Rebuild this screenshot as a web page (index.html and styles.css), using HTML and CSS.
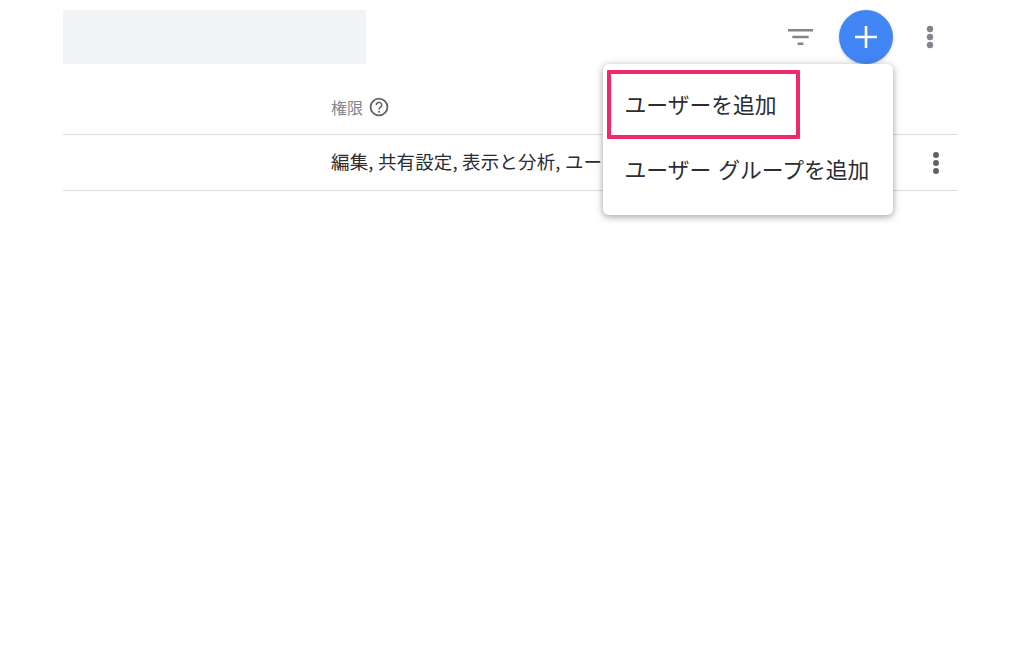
FILE: index.html
```html
<!DOCTYPE html>
<html lang="ja">
<head>
<meta charset="utf-8">
<title>ユーザーを追加</title>
<link rel="stylesheet" href="styles.css">
</head>
<body>
<div class="page">
  <header class="toolbar">
    <div class="placeholder"></div>
    <div class="actions">
      <svg class="filter-icon" width="25" height="18" viewBox="0 0 26 18"><path d="M0 2h26M4.500 9h17M10 16h6" stroke="#80868b" stroke-width="2.600" fill="none"/></svg>
      <div class="fab"><svg width="24" height="24" viewBox="0 0 24 24"><path d="M12 1v22M1 12h22" stroke="#fff" stroke-width="2.600" fill="none"/></svg></div>
      <svg class="more-top" width="8" height="24" viewBox="0 0 8 24"><circle cx="4" cy="4" r="3.200" fill="#80868b"/><circle cx="4" cy="12" r="3.200" fill="#80868b"/><circle cx="4" cy="20" r="3.200" fill="#80868b"/></svg>
    </div>
  </header>
  <div class="head-row">
    <span class="head-label">権限</span>
    <svg class="help" width="20" height="20" viewBox="0 0 20 20"><circle cx="10" cy="10" r="8.400" fill="none" stroke="#5f6368" stroke-width="1.800"/><path d="M7.300 8a2.700 2.700 0 1 1 4.300 2.200c-1 .7-1.600 1.200-1.600 2.400" fill="none" stroke="#5f6368" stroke-width="1.600"/><circle cx="10" cy="14.800" r="1" fill="#5f6368"/></svg>
  </div>
  <div class="row">
    <span class="row-text">編集, 共有設定, 表示と分析, ユー</span>
    <svg class="more-row" width="8" height="24" viewBox="0 0 8 24"><circle cx="4" cy="4" r="3" fill="#5f6368"/><circle cx="4" cy="12" r="3" fill="#5f6368"/><circle cx="4" cy="20" r="3" fill="#5f6368"/></svg>
  </div>
  <div class="menu">
    <div class="menu-item menu-item-first"><span class="highlight">ユーザーを追加</span></div>
    <div class="menu-item">ユーザー グループを追加</div>
  </div>
</div>
</body>
</html>
```
FILE: styles.css
```css
html, body {
  margin: 0;
  padding: 0;
  background: #fff;
}
body {
  font-family: "Noto Sans CJK JP", "Roboto", "Noto Sans", sans-serif;
  overflow: hidden;
}
.page {
  position: relative;
  width: 1024px;
  height: 662px;
  padding: 10px 90px 0 63px;
  box-sizing: border-box;
}
.toolbar {
  display: flex;
  justify-content: space-between;
  align-items: center;
  height: 54px;
}
.placeholder {
  width: 303px;
  height: 54px;
  background: #f1f3f4;
}
.actions {
  display: flex;
  align-items: center;
}
.filter-icon {
  margin-right: 26px;
}
.fab {
  width: 54px;
  height: 54px;
  border-radius: 50%;
  background: #4285f4;
  display: flex;
  align-items: center;
  justify-content: center;
  box-shadow: 0 1px 3px rgba(60, 64, 67, 0.25);
}
.more-top {
  margin-left: 33px;
}
.head-row {
  display: flex;
  align-items: center;
  height: 71px;
  box-sizing: border-box;
  padding-left: 268px;
  border-bottom: 1px solid #dadce0;
  width: 895px;
  padding-top: 16px;
}
.head-label {
  font-size: 16px;
  color: #80868b;
}
.help {
  margin-left: 6px;
}
.row {
  display: flex;
  align-items: center;
  justify-content: space-between;
  width: 895px;
  height: 56px;
  box-sizing: border-box;
  padding: 0 18px 0 268px;
  border-bottom: 1px solid #dadce0;
}
.row-text {
  font-size: 18.500px;
  letter-spacing: 0.15px;
  line-height: 26px;
  margin-bottom: 3px;
  color: #2b2d30;
  white-space: nowrap;
  width: 272px;
  overflow: hidden;
}
.menu {
  position: absolute;
  left: 603px;
  top: 64px;
  width: 290px;
  height: 151px;
  background: #fff;
  border-radius: 6px;
  box-shadow: 0 2px 6px rgba(60, 64, 67, 0.4), 0 1px 12px rgba(60, 64, 67, 0.12);
}
.menu-item {
  font-size: 21.800px;
  line-height: 32px;
  color: #2b2d30;
  padding-left: 21.500px;
  word-spacing: 2px;
  white-space: nowrap;
}
.menu-item-first {
  height: 75px;
  padding-left: 4px;
  padding-top: 6px;
  box-sizing: border-box;
}
.highlight {
  display: block;
  width: 193px;
  height: 69px;
  box-sizing: border-box;
  border: 4px solid #f0286c;
  border-radius: 1px;
  padding: 14px 0 0 13.500px;
}
.menu-item:last-child {
  padding-top: 14px;
}
```
